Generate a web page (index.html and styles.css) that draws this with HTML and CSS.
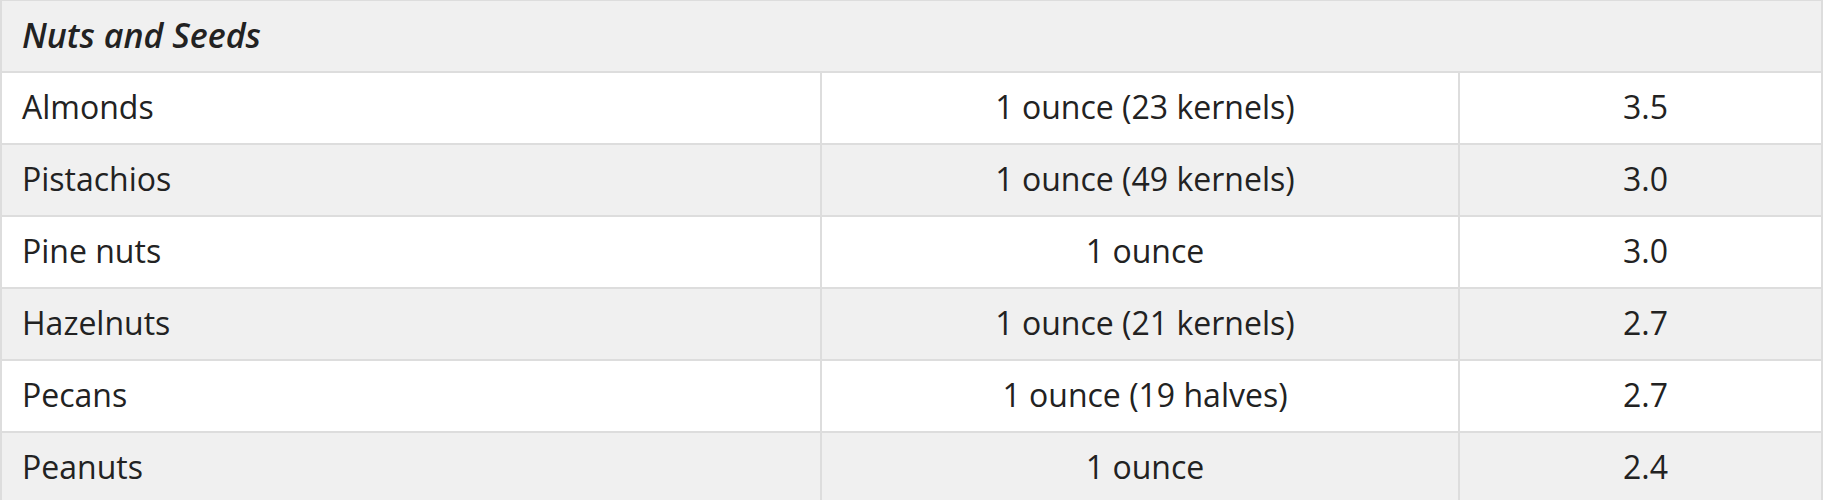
FILE: index.html
```html
<!DOCTYPE html>
<html lang="en">
<head>
<meta charset="utf-8">
<title>Nuts and Seeds</title>
<link rel="stylesheet" href="styles.css">
</head>
<body>
<table class="food-table">
  <colgroup>
    <col class="col-name">
    <col class="col-serving">
    <col class="col-value">
  </colgroup>
  <tbody>
    <tr class="group-row">
      <th colspan="3" class="group-title">Nuts and Seeds</th>
    </tr>
    <tr class="row-odd">
      <td class="cell-name">Almonds</td>
      <td class="cell-center">1 ounce (23 kernels)</td>
      <td class="cell-center">3.5</td>
    </tr>
    <tr class="row-even">
      <td class="cell-name">Pistachios</td>
      <td class="cell-center">1 ounce (49 kernels)</td>
      <td class="cell-center">3.0</td>
    </tr>
    <tr class="row-odd">
      <td class="cell-name">Pine nuts</td>
      <td class="cell-center">1 ounce</td>
      <td class="cell-center">3.0</td>
    </tr>
    <tr class="row-even">
      <td class="cell-name">Hazelnuts</td>
      <td class="cell-center">1 ounce (21 kernels)</td>
      <td class="cell-center">2.7</td>
    </tr>
    <tr class="row-odd">
      <td class="cell-name">Pecans</td>
      <td class="cell-center">1 ounce (19 halves)</td>
      <td class="cell-center">2.7</td>
    </tr>
    <tr class="row-even">
      <td class="cell-name">Peanuts</td>
      <td class="cell-center">1 ounce</td>
      <td class="cell-center">2.4</td>
    </tr>
  </tbody>
</table>
</body>
</html>
```
FILE: styles.css
```css
html, body {
  margin: 0;
  padding: 0;
  background: #ffffff;
}

body {
  font-family: "Open Sans", "Liberation Sans", sans-serif;
  color: #222222;
}

.food-table {
  width: 1823px;
  margin-top: -1px;
  border-collapse: separate;
  border-spacing: 0;
  table-layout: fixed;
  border-top: 2px solid #dddddd;
  border-left: 2px solid #dddddd;
  font-size: 32px;
}

.col-name { width: 820px; }
.col-serving { width: 638px; }
.col-value { width: 363px; }

.food-table th,
.food-table td {
  height: 67px;
  padding: 0 10px 3px 20px;
  border-right: 2px solid #dddddd;
  border-bottom: 2px solid #dddddd;
  vertical-align: middle;
  line-height: normal;
  box-sizing: content-box;
}

.group-row { background: #f0f0f0; }

.food-table .group-title {
  text-align: left;
  font-style: italic;
  font-weight: 600;
  font-size: 34px;
  padding-left: 20px;
  height: 68px;
  padding-bottom: 2px;
}

.row-odd { background: #ffffff; }
.row-even { background: #f0f0f0; }

.cell-name {
  text-align: left;
  font-weight: 400;
}

.cell-center {
  text-align: center;
  font-weight: 400;
}
```
